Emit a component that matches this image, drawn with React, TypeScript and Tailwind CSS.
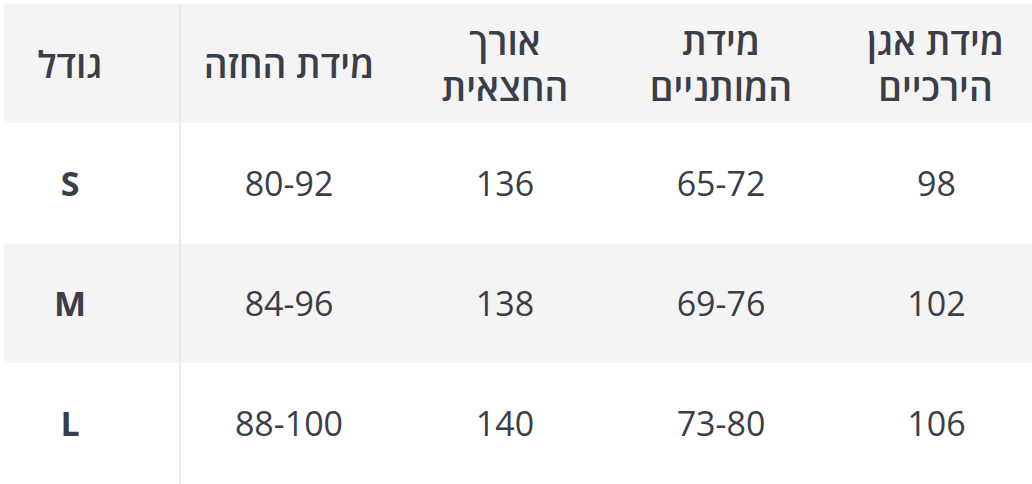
const headers = ["גודל", "מידת החזה", "אורך החצאית", "מידת המותניים", "מידת אגן הירכיים"];

const rows = [
  { size: "S", chest: "80-92", skirt: "136", waist: "65-72", hips: "98" },
  { size: "M", chest: "84-96", skirt: "138", waist: "69-76", hips: "102" },
  { size: "L", chest: "88-100", skirt: "140", waist: "73-80", hips: "106" },
];

const grid = "grid grid-cols-[177px_216px_216px_216px_183px]";

export default function App() {
  return (
    <div
      className="h-[484px] w-[1032px] overflow-hidden bg-white pl-[4px] pt-[4px] text-[#3b3e48]"
      style={{ fontFamily: '"Open Sans", "Noto Sans", "DejaVu Sans", sans-serif' }}
    >
      <div className={`${grid} h-[119px] bg-[#f4f4f4] text-[37px] font-semibold leading-[46px]`}>
        <div dir="rtl" className="flex items-center justify-center border-r-2 border-[#e8e8e8] pr-[43px]">
          {headers[0]}
        </div>
        <div dir="rtl" className="flex items-center justify-center px-1 text-center">
          {headers[1]}
        </div>
        <div dir="rtl" className="flex items-center justify-center px-4 text-center">
          {headers[2]}
        </div>
        <div dir="rtl" className="flex items-center justify-center px-4 text-center">
          {headers[3]}
        </div>
        <div dir="rtl" className="flex items-center justify-center pl-[30px] text-center">
          {headers[4]}
        </div>
      </div>

      {rows.map((r, i) => (
        <div
          key={r.size}
          className={`${grid} text-[34px] ${i === 1 ? "h-[119px] bg-[#f4f4f4]" : "h-[121px] bg-white"}`}
        >
          <div className="flex items-center justify-center border-r-2 border-[#e8e8e8] pr-[43px] font-bold">
            {r.size}
          </div>
          <div className="flex items-center justify-center">{r.chest}</div>
          <div className="flex items-center justify-center">{r.skirt}</div>
          <div className="flex items-center justify-center">{r.waist}</div>
          <div className="flex items-center justify-center pl-[32px]">{r.hips}</div>
        </div>
      ))}
    </div>
  );
}
